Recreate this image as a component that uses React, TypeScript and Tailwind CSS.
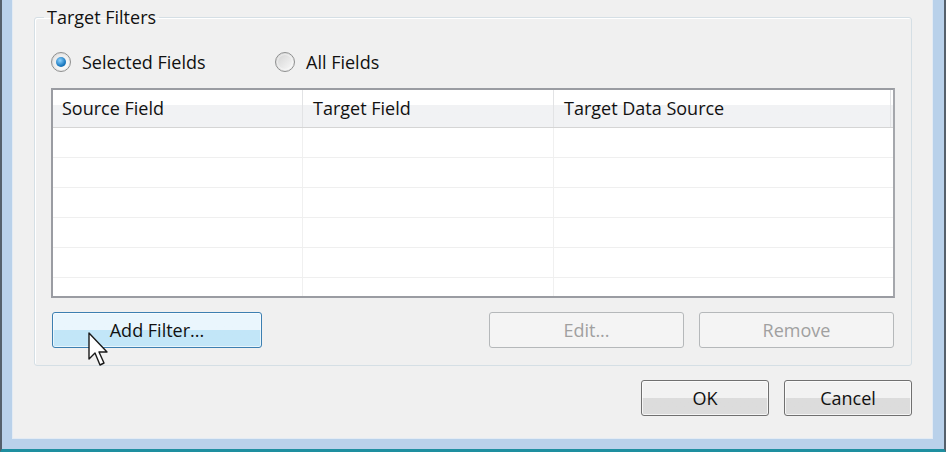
import React from 'react';

const font = { fontFamily: '"Open Sans", "Noto Sans", sans-serif' };

const Radio: React.FC<{ checked?: boolean; label: string }> = ({ checked, label }) => (
  <label className="flex items-center gap-[11px] h-[22px]">
    <span className="w-[20px] h-[20px] rounded-full border border-[#8e8f8f] bg-gradient-to-br from-[#e4e4e4] to-[#ffffff] flex items-center justify-center shadow-[inset_0_0_2px_rgba(0,0,0,0.15)]">
      {checked ? (
        <span className="w-[10px] h-[10px] rounded-full bg-[radial-gradient(circle_at_40%_35%,#8fd3ff,#1d7cc2_60%,#0d4f8a)]" />
      ) : (
        <span className="w-[14px] h-[14px] rounded-full bg-gradient-to-br from-[#d6d6d6] to-[#f7f7f7]" />
      )}
    </span>
    <span className="text-[#111]">{label}</span>
  </label>
);

const Cursor: React.FC = () => (
  <svg className="absolute left-[35px] top-[20px]" width="26" height="38" viewBox="0 0 26 38">
    <path
      d="M2 1 L2 27 L8 21 L13 33 L17 31 L12 20 L20 20 Z"
      fill="#ffffff"
      stroke="#1a1a1a"
      strokeWidth="1.4"
      strokeLinejoin="round"
    />
  </svg>
);

const rows = [0, 1, 2, 3, 4, 5];

export default function App() {
  return (
    <div
      className="w-[946px] h-[452px] flex flex-col bg-[#b9d1ea] border-l-2 border-l-[#55606b] border-r-2 border-r-[#55606b] border-b-[3px] border-b-[#1e8fa0] text-[18px]"
      style={font}
    >
      <div className="flex-1 ml-[10px] mr-[11px] mb-[10px] bg-[#f0f0f0] border-x border-b border-[#e3ebf4] pl-[21px] pr-[20px] pt-[7px] flex flex-col">
        <fieldset className="border border-[#d5dfe5] rounded-[3px] pl-[16px] pr-[16px] pb-[17px] shadow-[inset_1px_1px_0_#ffffff]">
          <legend className="-ml-[7px] px-[3px] leading-[20px] text-[#111]">Target Filters</legend>

          <div className="flex items-center mt-[24px]">
            <div className="w-[224px]">
              <Radio checked label="Selected Fields" />
            </div>
            <Radio label="All Fields" />
          </div>

          <div className="mt-[15px] h-[210px] border-2 border-[#9a9ca2] border-r-[#a5a7ac] bg-white overflow-hidden">
            <div className="flex h-[38px] border-b border-[#d5d5d5] bg-gradient-to-b from-[#ffffff] from-40% to-[#f1f2f4] to-40%">
              <div className="w-[250px] border-r border-[#e2e3e5] pl-[9px] flex items-center text-[#111]">Source Field</div>
              <div className="w-[251px] border-r border-[#e2e3e5] pl-[10px] flex items-center text-[#111]">Target Field</div>
              <div className="w-[337px] border-r border-[#e2e3e5] pl-[10px] flex items-center text-[#111]">Target Data Source</div>
              <div className="flex-1" />
            </div>
            {rows.map((r) => (
              <div key={r} className="flex h-[30px] border-b border-[#efefef]">
                <div className="w-[250px] border-r border-[#f0f0f0]" />
                <div className="w-[251px] border-r border-[#f0f0f0]" />
                <div className="w-[337px]" />
              </div>
            ))}
          </div>

          <div className="flex mt-[14px] ml-[1px] mr-[1px] h-[36px]">
            <div className="relative w-[210px]">
              <button className="w-full h-full rounded-[3px] border border-[#3c7fb1] bg-gradient-to-b from-[#eaf6fd] from-50% to-[#c2e6f8] to-50% shadow-[inset_0_0_0_1px_rgba(255,255,255,0.6)] text-[#111]">
                Add Filter...
              </button>
              <Cursor />
            </div>
            <div className="flex-1" />
            <button className="w-[195px] rounded-[3px] border border-[#b5b8ba] bg-[#f4f4f4] text-[#a0a0a0]">Edit...</button>
            <button className="w-[195px] ml-[15px] rounded-[3px] border border-[#b5b8ba] bg-[#f4f4f4] text-[#a0a0a0]">Remove</button>
          </div>
        </fieldset>

        <div className="flex justify-end mt-[14px] gap-[15px]">
          <button className="w-[128px] h-[36px] rounded-[3px] border border-[#707070] bg-gradient-to-b from-[#f2f2f2] from-50% to-[#dcdcdc] to-50% shadow-[inset_0_0_0_1px_rgba(255,255,255,0.7)] text-[#111]">
            OK
          </button>
          <button className="w-[128px] h-[36px] rounded-[3px] border border-[#707070] bg-gradient-to-b from-[#f2f2f2] from-50% to-[#dcdcdc] to-50% shadow-[inset_0_0_0_1px_rgba(255,255,255,0.7)] text-[#111]">
            Cancel
          </button>
        </div>
      </div>
    </div>
  );
}
